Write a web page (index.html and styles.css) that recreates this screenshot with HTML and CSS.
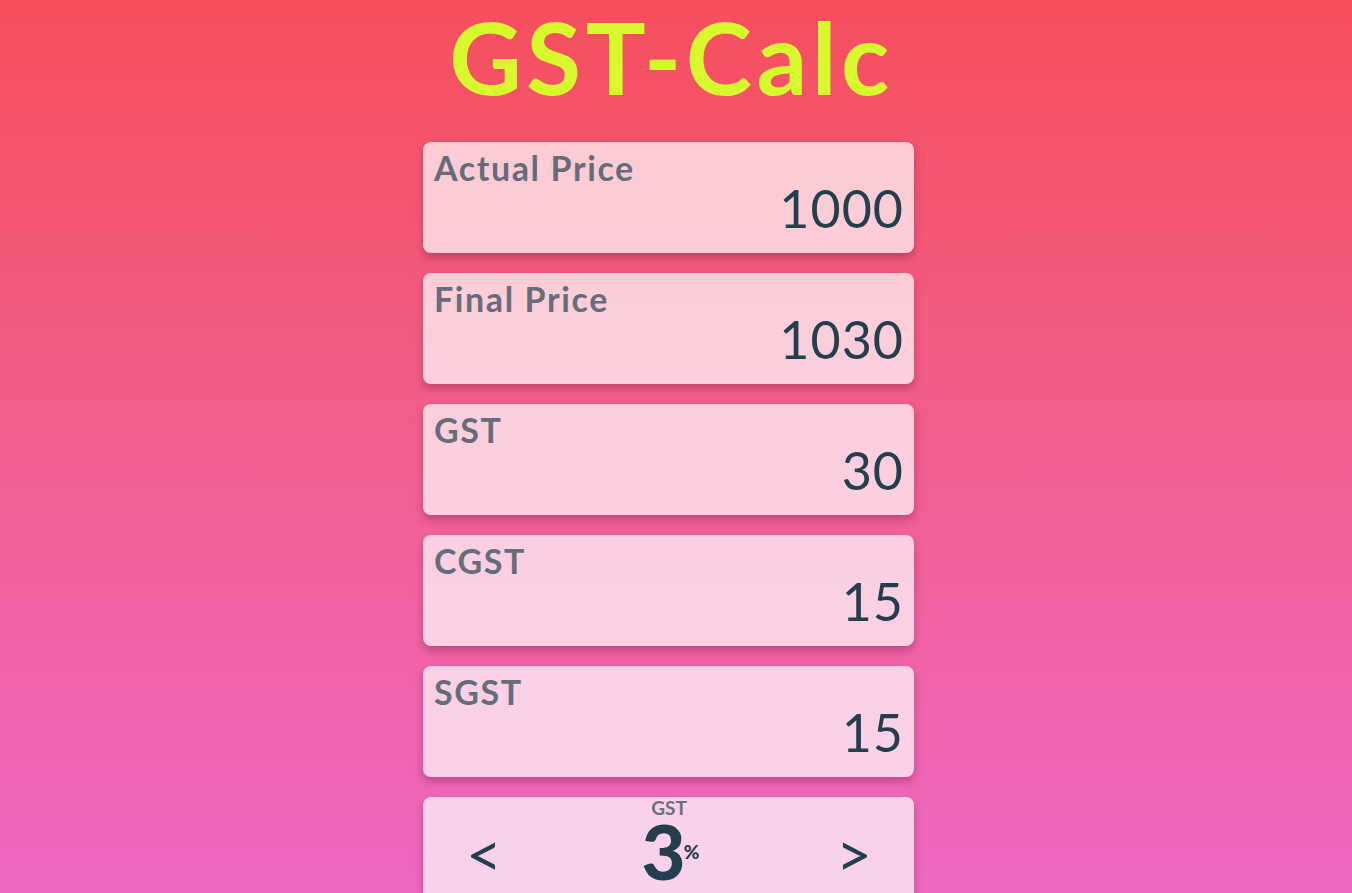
FILE: index.html
```html
<!DOCTYPE html>
<html lang="en">
<head>
<meta charset="utf-8">
<title>GST-Calc</title>
<link rel="stylesheet" href="styles.css">
</head>
<body>
<main class="app">
  <h1 class="title">GST-Calc</h1>
  <section class="cards">
    <div class="card">
      <div class="card-label">Actual Price</div>
      <div class="card-value">1000</div>
    </div>
    <div class="card">
      <div class="card-label">Final Price</div>
      <div class="card-value">1030</div>
    </div>
    <div class="card">
      <div class="card-label">GST</div>
      <div class="card-value">30</div>
    </div>
    <div class="card">
      <div class="card-label">CGST</div>
      <div class="card-value">15</div>
    </div>
    <div class="card">
      <div class="card-label">SGST</div>
      <div class="card-value">15</div>
    </div>
    <div class="card rate-card">
      <button class="arrow" type="button">&lt;</button>
      <div class="rate">
        <div class="rate-label">GST</div>
        <div class="rate-value">3<span class="rate-unit">%</span></div>
      </div>
      <button class="arrow" type="button">&gt;</button>
    </div>
  </section>
</main>
</body>
</html>
```

FILE: styles.css
```css
html, body {
  margin: 0;
  padding: 0;
}
body {
  min-height: 100vh;
  background: linear-gradient(180deg, #f64f5d 0%, #f35c85 40%, #ee68c2 100%);
  background-attachment: fixed;
  font-family: "Lato", "Liberation Sans", sans-serif;
}
.app {
  display: flex;
  flex-direction: column;
  align-items: center;
  padding-right: 15px;
  padding-bottom: 40px;
}
.title {
  margin: 0;
  font-size: 100px;
  line-height: 112px;
  font-weight: 700;
  color: #d9f92f;
  letter-spacing: 4.5px;
  padding: 0 0 30px 6px;
}
.cards {
  width: 491px;
  display: flex;
  flex-direction: column;
  gap: 20px;
}
.card {
  background: rgba(255, 255, 255, 0.7);
  border-radius: 8px;
  box-shadow: 0 5px 8px rgba(110, 20, 60, 0.35);
  height: 111px;
  box-sizing: border-box;
  padding: 6px 10px 0 11px;
  display: flex;
  flex-direction: column;
}
.card-label {
  font-size: 34px;
  font-weight: 700;
  color: #676c7b;
  line-height: 40px;
  letter-spacing: 1.6px;
}
.card-value {
  font-size: 52px;
  font-weight: 400;
  color: #233f4d;
  text-align: right;
  line-height: 40px;
  letter-spacing: 1px;
}
.rate-card {
  flex-direction: row;
  justify-content: space-between;
  align-items: flex-start;
  padding: 0 42px 0 43px;
  height: 130px;
}
.arrow {
  background: none;
  border: none;
  padding: 0;
  margin-top: 24px;
  font-family: inherit;
  font-size: 62px;
  font-weight: 400;
  color: #233f4d;
  line-height: 64px;
}
.rate {
  display: flex;
  flex-direction: column;
  align-items: center;
  padding-top: 1px;
}
.rate-label {
  font-size: 19px;
  font-weight: 700;
  color: #6b6f7e;
  line-height: 20px;
}
.rate-value {
  font-size: 76px;
  font-weight: 900;
  color: #233f4d;
  line-height: 66px;
  display: flex;
  align-items: center;
  padding-left: 3px;
}
.rate-unit {
  font-size: 19px;
  font-weight: 900;
  margin-left: -2px;
  line-height: 1;
}
```
